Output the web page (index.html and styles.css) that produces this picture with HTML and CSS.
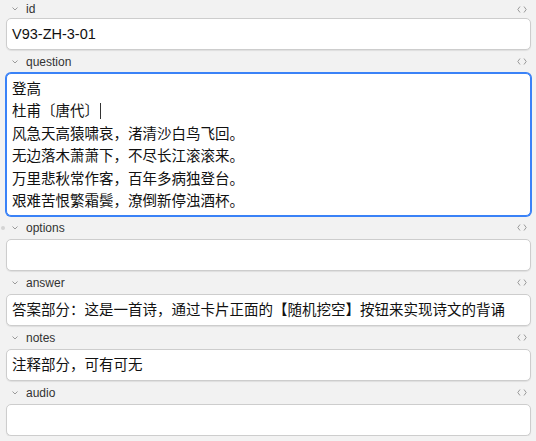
FILE: index.html
```html
<!DOCTYPE html>
<html lang="zh">
<head>
  <meta charset="UTF-8">
  <title>Editor</title>
  <link rel="stylesheet" href="styles.css">
</head>
<body>
  <div class="fields">
    <div class="field">
      <div class="label-row">
        <svg class="chevron" width="6" height="4" viewBox="0 0 6 4"><path d="M0.5 0.5 L3 3 L5.5 0.5" fill="none" stroke="#9a9a9a" stroke-width="1"/></svg>
        <span class="label-name">id</span>
        <svg class="code-toggle" width="10" height="7" viewBox="0 0 10 7"><path d="M3 0.5 L0.8 3.5 L3 6.5 M7 0.5 L9.2 3.5 L7 6.5" fill="none" stroke="#9a9a9a" stroke-width="1"/></svg>
      </div>
      <div class="editable">V93-ZH-3-01</div>
    </div>

    <div class="field">
      <div class="label-row">
        <svg class="chevron" width="6" height="4" viewBox="0 0 6 4"><path d="M0.5 0.5 L3 3 L5.5 0.5" fill="none" stroke="#9a9a9a" stroke-width="1"/></svg>
        <span class="label-name">question</span>
        <svg class="code-toggle" width="10" height="7" viewBox="0 0 10 7"><path d="M3 0.5 L0.8 3.5 L3 6.5 M7 0.5 L9.2 3.5 L7 6.5" fill="none" stroke="#9a9a9a" stroke-width="1"/></svg>
      </div>
      <div class="editable focused">
        <div>登高</div>
        <div>杜甫〔唐代〕<span class="caret"></span></div>
        <div>风急天高猿啸哀，渚清沙白鸟飞回。</div>
        <div>无边落木萧萧下，不尽长江滚滚来。</div>
        <div>万里悲秋常作客，百年多病独登台。</div>
        <div>艰难苦恨繁霜鬓，潦倒新停浊酒杯。</div>
      </div>
    </div>

    <div class="field">
      <div class="label-row">
        <span class="pin-dot"></span>
        <svg class="chevron" width="6" height="4" viewBox="0 0 6 4"><path d="M0.5 0.5 L3 3 L5.5 0.5" fill="none" stroke="#9a9a9a" stroke-width="1"/></svg>
        <span class="label-name">options</span>
        <svg class="code-toggle" width="10" height="7" viewBox="0 0 10 7"><path d="M3 0.5 L0.8 3.5 L3 6.5 M7 0.5 L9.2 3.5 L7 6.5" fill="none" stroke="#9a9a9a" stroke-width="1"/></svg>
      </div>
      <div class="editable"></div>
    </div>

    <div class="field">
      <div class="label-row">
        <svg class="chevron" width="6" height="4" viewBox="0 0 6 4"><path d="M0.5 0.5 L3 3 L5.5 0.5" fill="none" stroke="#9a9a9a" stroke-width="1"/></svg>
        <span class="label-name">answer</span>
        <svg class="code-toggle" width="10" height="7" viewBox="0 0 10 7"><path d="M3 0.5 L0.8 3.5 L3 6.5 M7 0.5 L9.2 3.5 L7 6.5" fill="none" stroke="#9a9a9a" stroke-width="1"/></svg>
      </div>
      <div class="editable">答案部分：这是一首诗，通过卡片正面的【随机挖空】按钮来实现诗文的背诵</div>
    </div>

    <div class="field">
      <div class="label-row">
        <svg class="chevron" width="6" height="4" viewBox="0 0 6 4"><path d="M0.5 0.5 L3 3 L5.5 0.5" fill="none" stroke="#9a9a9a" stroke-width="1"/></svg>
        <span class="label-name">notes</span>
        <svg class="code-toggle" width="10" height="7" viewBox="0 0 10 7"><path d="M3 0.5 L0.8 3.5 L3 6.5 M7 0.5 L9.2 3.5 L7 6.5" fill="none" stroke="#9a9a9a" stroke-width="1"/></svg>
      </div>
      <div class="editable">注释部分，可有可无</div>
    </div>

    <div class="field">
      <div class="label-row">
        <svg class="chevron" width="6" height="4" viewBox="0 0 6 4"><path d="M0.5 0.5 L3 3 L5.5 0.5" fill="none" stroke="#9a9a9a" stroke-width="1"/></svg>
        <span class="label-name">audio</span>
        <svg class="code-toggle" width="10" height="7" viewBox="0 0 10 7"><path d="M3 0.5 L0.8 3.5 L3 6.5 M7 0.5 L9.2 3.5 L7 6.5" fill="none" stroke="#9a9a9a" stroke-width="1"/></svg>
      </div>
      <div class="editable"></div>
    </div>
  </div>
</body>
</html>
```

FILE: styles.css
```css
body {
  margin: 0;
  background-color: #f2f2f2;
  font-family: 'Liberation Sans', 'Noto Sans CJK SC', sans-serif;
  color: #111;
}

.fields {
  padding: 0 5px 0 6px;
}

.label-row {
  position: relative;
  display: flex;
  align-items: center;
  height: 18px;
  padding: 0 4px 0 6px;
}

.field + .field .label-row {
  height: 23px;
}

.chevron {
  margin-right: 8px;
}

.label-name {
  flex: 1;
  font-size: 12px;
  color: #333;
}

.pin-dot {
  position: absolute;
  left: -5px;
  top: 10px;
  width: 4px;
  height: 4px;
  border-radius: 50%;
  background-color: #d4d4d4;
}

.editable {
  min-height: 22.4px;
  padding: 4px 5px 3.6px 5px;
  font-size: 14.5px;
  line-height: 22.4px;
  background-color: #ffffff;
  border: 1px solid #cdcdcd;
  border-radius: 5px;
  box-shadow: 0 1px 1px rgba(0, 0, 0, 0.08);
}

.editable.focused {
  padding-bottom: 2.6px;
  border-color: #3a82f7;
  box-shadow: 0 0 0 1px #3a82f7;
}

.caret {
  display: inline-block;
  width: 1px;
  height: 16px;
  margin-left: 1px;
  vertical-align: -3px;
  background-color: #333;
}
```
